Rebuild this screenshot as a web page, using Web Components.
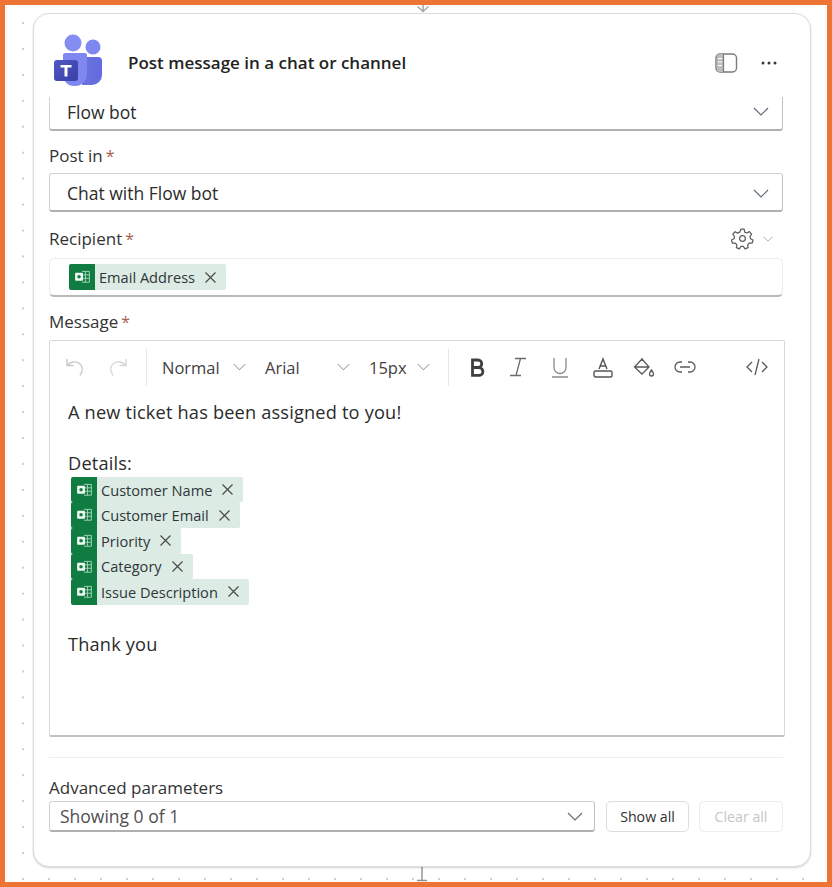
<!DOCTYPE html>
<html>
<head>
<meta charset="utf-8">
<style>
    html, body { margin: 0; padding: 0; background: #fff; }
    body { font-family: "Open Sans", "Noto Sans", sans-serif; color: #242424; }
</style>
</head>
<body>

<flow-canvas>
    <flow-card title-text="Post message in a chat or channel">
        <flow-select clipped>Flow bot</flow-select>
        <field-label required style="margin-top:13px">Post in</field-label>
        <flow-select>Chat with Flow bot</flow-select>
        <field-label required gear style="margin-top:15px;margin-bottom:8px">Recipient</field-label>
        <token-box><token-chip>Email Address</token-chip></token-box>
        <field-label required style="margin-top:13px;margin-bottom:7px">Message</field-label>
        <rich-editor>
            <editor-line>A new ticket has been assigned to you!</editor-line>
            <editor-line></editor-line>
            <editor-line>Details:</editor-line>
            <token-chip inset>Customer Name</token-chip>
            <token-chip inset>Customer Email</token-chip>
            <token-chip inset>Priority</token-chip>
            <token-chip inset>Category</token-chip>
            <token-chip inset>Issue Description</token-chip>
            <editor-line style="margin-bottom:2px"></editor-line>
            <editor-line>Thank you</editor-line>
        </rich-editor>
        <advanced-params></advanced-params>
    </flow-card>
</flow-canvas>

<script>
    const chevron = (w, h, color) => `<svg width="${w}" height="${h}" viewBox="0 0 16 9" fill="none" stroke="${color}" stroke-width="1.1"><path d="M1 1l7 7 7-7"/></svg>`;

    class FlowCanvas extends HTMLElement {
        constructor() {
            super();
            this.attachShadow({ mode: 'open' });
            this.shadowRoot.innerHTML = `
                <style>
                    :host {
                        display: block;
                        position: relative;
                        box-sizing: border-box;
                        width: 832px;
                        height: 887px;
                        padding: 8px 21px 0 28px;
                        overflow: hidden;
                        border: 5px solid #ed7435;
                        background-color: #fff;
                        background-image: radial-gradient(circle at 1px 1px, #cfcfcf 1px, transparent 1.3px);
                        background-size: 26px 25.940px;
                        background-position: 17px 17px;
                    }
                    .in, .out { position: absolute; left: 411px; }
                    .in { top: -2px; }
                    .out { top: 855px; }
                </style>
                <svg class="in" width="14" height="10" viewBox="0 0 14 10" fill="none" stroke="#a8a8a8" stroke-width="1.6"><path d="M7 0v8M1.500 3.500L7 8.500l5.500-5"/></svg>
                <svg class="out" width="14" height="27" viewBox="0 0 14 27" fill="none" stroke="#8f8f8f" stroke-width="1.4"><path d="M6 0v20M1 20.500h10"/></svg>
                <slot></slot>`;
        }
    }

    class FlowCard extends HTMLElement {
        constructor() {
            super();
            this.attachShadow({ mode: 'open' });
            this.shadowRoot.innerHTML = `
                <style>
                    :host {
                        display: block;
                        position: relative;
                        box-sizing: border-box;
                        width: 778px;
                        height: 854px;
                        background: #fff;
                        border: 1px solid #dcdcdc;
                        border-radius: 16px;
                        box-shadow: 0 1px 2px rgba(0,0,0,.18);
                    }
                    header {
                        display: flex;
                        align-items: center;
                        height: 83px;
                        padding: 14px 33px 0 18px;
                        box-sizing: border-box;
                    }
                    .title {
                        flex: 1;
                        margin-left: 24px;
                        font-size: 17px;
                        font-weight: 600;
                        white-space: nowrap;
                    }
                    .logo { flex: none; margin-top: -3px; }
                    .actions { display: flex; align-items: center; gap: 23px; }
                    main { padding: 0 27px 0 15px; }
                </style>
                <header>
                    <svg class="logo" width="52" height="54" viewBox="0 0 52 54">
                        <defs>
                            <linearGradient id="back" x1="0" y1="0" x2="1" y2="0"><stop offset="0" stop-color="#6a72dc"/><stop offset="1" stop-color="#636be0"/></linearGradient>
                            <linearGradient id="plate" x1="0" y1="0" x2="1" y2="1"><stop offset="0" stop-color="#5058c4"/><stop offset="1" stop-color="#3a3fa6"/></linearGradient>
                        </defs>
                        <circle cx="41" cy="13" r="7.500" fill="#7f87f0"/>
                        <path d="M30 23h16a4 4 0 0 1 4 4v14a10 10 0 0 1-10 10H30z" fill="url(#back)"/>
                        <circle cx="21" cy="9" r="8.500" fill="#858df2"/>
                        <path d="M11 21a2 2 0 0 1 2-2h20a2 2 0 0 1 2 2v19a12 12 0 0 1-12 12h-1A11 11 0 0 1 11 41z" fill="#7f87f0"/>
                        <rect x="2" y="26" width="24" height="21" rx="3" fill="url(#plate)"/>
                        <path d="M8.500 31h11v2.600h-4v9h-3v-9h-4z" fill="#fff"/>
                    </svg>
                    <span class="title">${this.getAttribute('title-text')}</span>
                    <span class="actions">
                        <svg width="23" height="20" viewBox="0 0 23 20" fill="none"><rect x="1" y="1" width="20.500" height="18" rx="4" stroke="#7a7a7a" stroke-width="1.400"/><path d="M2 4a3 3 0 0 1 3-3h3v18H5a3 3 0 0 1-3-3z" fill="#bdbdbd"/><path d="M3 5.500h4M3 9h4M3 12.500h4" stroke="#fff" stroke-width="1"/><path d="M8.500 1v18" stroke="#7a7a7a" stroke-width="1.200"/></svg>
                        <svg width="16" height="4" viewBox="0 0 16 4" fill="#3a3a3a"><circle cx="2" cy="2" r="1.500"/><circle cx="8" cy="2" r="1.500"/><circle cx="14" cy="2" r="1.500"/></svg>
                    </span>
                </header>
                <main><slot></slot></main>`;
        }
    }

    class FlowSelect extends HTMLElement {
        constructor() {
            super();
            this.attachShadow({ mode: 'open' });
            this.shadowRoot.innerHTML = `
                <style>
                    :host {
                        display: flex;
                        align-items: center;
                        justify-content: space-between;
                        box-sizing: border-box;
                        height: 39px;
                        padding: 2px 13px 0 17px;
                        background: #fff;
                        border: 1px solid #d1d1d1;
                        border-bottom: 2px solid #b0b0b0;
                        border-right-color: #c2c2c2;
                        border-radius: 3px;
                        font-size: 17.500px;
                        color: #2b2b2b;
                    }
                    :host([clipped]) {
                        height: 34px;
                        padding-top: 0;
                        padding-bottom: 3px;
                        border-top: 0;
                        border-radius: 0 0 3px 3px;
                    }
                    :host([compact]) {
                        height: 31px;
                        padding: 0 11px 0 10px;
                        color: #505050;
                    }
                </style>
                <span><slot></slot></span>
                ${chevron(16, 9, '#5f6a78')}`;
        }
    }

    class FieldLabel extends HTMLElement {
        constructor() {
            super();
            this.attachShadow({ mode: 'open' });
            const star = this.hasAttribute('required') ? '<span class="star">*</span>' : '';
            const gear = this.hasAttribute('gear') ? `
                <span class="gear">
                    <svg width="23" height="23" viewBox="0 0 24 24" fill="none" stroke="#5c5c5c" stroke-width="1.300" stroke-linejoin="round"><circle cx="12" cy="12" r="3"/><path d="M10.300 2.300h3.400l.6 3 2.200 1 2.700-1.500 2.300 2.600-1.700 2.500.5 2.300 2.700 1.400-1 3.300-3.100-.1-1.500 1.800.4 3-3.200 1.200-1.700-2.500h-2.400l-1.800 2.500-3.100-1.300.5-3-1.600-1.700-3 .1-1-3.300 2.700-1.400.4-2.300-1.700-2.500 2.400-2.500 2.600 1.500 2.200-1z"/></svg>
                    ${chevron(10, 6, '#8a8a8a')}
                </span>` : '';
            this.shadowRoot.innerHTML = `
                <style>
                    :host {
                        display: flex;
                        align-items: center;
                        height: 23px;
                        margin-bottom: 6px;
                        font-size: 17px;
                        color: #333;
                    }
                    .star { color: #a9604c; margin-left: 3px; font-size: 16px; }
                    .gear { margin-left: auto; margin-right: 10px; display: flex; align-items: center; gap: 9px; }
                </style>
                <span><slot></slot></span>${star}${gear}`;
        }
    }

    class TokenBox extends HTMLElement {
        constructor() {
            super();
            this.attachShadow({ mode: 'open' });
            this.shadowRoot.innerHTML = `
                <style>
                    :host {
                        display: flex;
                        align-items: center;
                        box-sizing: border-box;
                        height: 39px;
                        padding: 0 19px;
                        background: #fff;
                        border: 1px solid #ececec;
                        border-bottom: 2px solid #b8b8b8;
                        border-radius: 5px;
                    }
                </style>
                <slot></slot>`;
        }
    }

    class TokenChip extends HTMLElement {
        constructor() {
            super();
            this.attachShadow({ mode: 'open' });
            this.shadowRoot.innerHTML = `
                <style>
                    :host {
                        display: flex;
                        align-items: center;
                        width: fit-content;
                        height: 25.600px;
                        background: #dcebe3;
                        border-radius: 2px;
                        font-size: 14.600px;
                        color: #30363a;
                        white-space: nowrap;
                    }
                    :host([inset]) { margin-left: 3px; }
                    .icon {
                        flex: none;
                        width: 26px;
                        height: 100%;
                        background: #107c41;
                        border-radius: 2px 0 0 2px;
                    }
                    .icon svg { display: block; }
                    .name { margin-left: 4px; }
                    .close { margin: 0 10px 0 10px; }
                </style>
                <span class="icon">
                    <svg width="26" height="25.600" viewBox="0 0 26 26" fill="none">
                        <path d="M13 7.500h7.500v11H13M13 11h7.500M13 14.500h7.500M16.500 7.500v11" stroke="#9fd0b4" stroke-width="1"/>
                        <rect x="6" y="9" width="8" height="8" rx=".8" fill="#eef7f1"/>
                        <circle cx="10" cy="13" r="1.800" fill="#107c41"/>
                    </svg>
                </span>
                <span class="name"><slot></slot></span>
                <svg class="close" width="11" height="11" viewBox="0 0 11 11" stroke="#4a4a4a" stroke-width="1.200"><path d="M.5.500l10 10M10.500.500l-10 10"/></svg>`;
        }
    }

    class EditorLine extends HTMLElement {
        constructor() {
            super();
            this.attachShadow({ mode: 'open' });
            this.shadowRoot.innerHTML = `
                <style>
                    :host { display: block; height: 25.600px; line-height: 25.600px; font-size: 18.200px; letter-spacing: .18px; color: #2b2b2b; white-space: nowrap; }
                </style>
                <slot></slot>`;
        }
    }

    class RichEditor extends HTMLElement {
        constructor() {
            super();
            this.attachShadow({ mode: 'open' });
            this.shadowRoot.innerHTML = `
                <style>
                    :host {
                        display: block;
                        box-sizing: border-box;
                        width: 736px;
                        height: 397px;
                        background: #fff;
                        border: 1px solid #d6d6d6;
                        border-bottom: 2px solid #c2c2c2;
                        border-radius: 2px;
                    }
                    .bar {
                        display: flex;
                        align-items: center;
                        height: 52px;
                        padding-left: 15px;
                        font-size: 16.500px;
                        color: #414141;
                    }
                    .bar > * { flex: none; }
                    .sep { width: 1px; height: 37px; background: #e6e6e6; }
                    .pick { display: flex; align-items: center; justify-content: space-between; }
                    .content { padding: 7px 18px 0; }
                </style>
                <div class="bar">
                    <svg width="22" height="22" viewBox="0 0 22 22" fill="none" stroke="#c9c9c9" stroke-width="1.400"><path d="M2 3v6.500h6.500M2.500 9c3-3 8-4.500 12-1.500 3.500 2.600 3.500 7 .5 12"/></svg>
                    <svg style="margin-left:19px" width="22" height="22" viewBox="0 0 22 22" fill="none" stroke="#d6d6d6" stroke-width="1.400"><path d="M20 3v6.500h-6.500M19.500 9c-3-3-8-4.500-12-1.500-3.500 2.600-3.500 7-.5 12"/></svg>
                    <span class="sep" style="margin-left:18px"></span>
                    <span class="pick" style="margin-left:15px;width:84px">Normal ${chevron(13, 8, '#7b7b7b')}</span>
                    <span class="pick" style="margin-left:19px;width:85px">Arial ${chevron(13, 8, '#7b7b7b')}</span>
                    <span class="pick" style="margin-left:19px;width:61px">15px ${chevron(13, 8, '#7b7b7b')}</span>
                    <span class="sep" style="margin-left:18px"></span>
                    <svg style="margin-left:21px" width="15" height="19" viewBox="0 0 15 19" fill="none" stroke="#404040" stroke-width="2.800"><path d="M2.500 2h5.500a3.500 3.500 0 0 1 0 7.500H2.500zM2.500 9.500h6.500a3.800 3.800 0 0 1 0 7.800H2.500z"/></svg>
                    <svg style="margin-left:24px" width="18" height="20" viewBox="0 0 18 20" fill="none" stroke="#6c6c6c" stroke-width="1.300"><path d="M6 1.500h11M11.500 1.500L7 18.500M1 18.500h11"/></svg>
                    <svg style="margin-left:24px" width="18" height="21" viewBox="0 0 18 21" fill="none" stroke="#8a8a8a" stroke-width="1.300"><path d="M3 1v9.500a6 6 0 0 0 12 0V1M1 20h16"/></svg>
                    <svg style="margin-left:24px" width="20" height="21" viewBox="0 0 20 21" fill="none" stroke="#555" stroke-width="1.400"><path d="M6 12L10 2l4 10M7.500 9h5"/><rect x="1" y="14" width="18" height="6" rx="1.500"/></svg>
                    <svg style="margin-left:20px" width="22" height="21" viewBox="0 0 22 21" fill="none" stroke="#5a5a5a" stroke-width="1.300"><path d="M9 2L1.500 10 9 17l7-7zM2 10h14M9 1v3"/><path d="M18.500 13c1.500 2 2 3 2 4a2 2 0 0 1-4 0c0-1 .5-2 2-4z"/></svg>
                    <svg style="margin-left:19px" width="22" height="12" viewBox="0 0 22 12" fill="none" stroke="#5a5a5a" stroke-width="1.300"><path d="M8 1H6a5 5 0 0 0 0 10h2M14 1h2a5 5 0 0 1 0 10h-2M6 6h10"/></svg>
                    <svg style="margin-left:50px" width="22" height="18" viewBox="0 0 22 18" fill="none" stroke="#5a5a5a" stroke-width="1.300"><path d="M6 4L1 9l5 5M16 4l5 5-5 5M13 1L9 17"/></svg>
                </div>
                <div class="content"><slot></slot></div>`;
        }
    }

    class AdvancedParams extends HTMLElement {
        constructor() {
            super();
            this.attachShadow({ mode: 'open' });
            this.shadowRoot.innerHTML = `
                <style>
                    :host { display: block; margin-top: 20px; }
                    hr { margin: 0 0 18px; border: 0; border-top: 1px solid #ececec; }
                    .label { font-size: 17px; line-height: 23px; margin-bottom: 2px; color: #333; }
                    .row { display: flex; align-items: center; }
                    flow-select { flex: 1; }
                    button {
                        box-sizing: border-box;
                        width: 84px;
                        height: 31px;
                        margin-left: 10px;
                        padding: 0;
                        background: #fff;
                        border: 1px solid #dedede;
                        border-radius: 5px;
                        font: 500 14.200px "Open Sans", sans-serif;
                        color: #303030;
                    }
                    button.show { width: 83px; margin-left: 11px; }
                    button.clear { color: #c6c6c6; border-color: #ececec; }
                </style>
                <hr>
                <div class="label">Advanced parameters</div>
                <div class="row">
                    <flow-select compact>Showing 0 of 1</flow-select>
                    <button class="show">Show all</button>
                    <button class="clear">Clear all</button>
                </div>`;
        }
    }

    window.customElements.define('flow-canvas', FlowCanvas);
    window.customElements.define('flow-card', FlowCard);
    window.customElements.define('flow-select', FlowSelect);
    window.customElements.define('field-label', FieldLabel);
    window.customElements.define('token-box', TokenBox);
    window.customElements.define('token-chip', TokenChip);
    window.customElements.define('editor-line', EditorLine);
    window.customElements.define('rich-editor', RichEditor);
    window.customElements.define('advanced-params', AdvancedParams);
</script>
</body>
</html>
